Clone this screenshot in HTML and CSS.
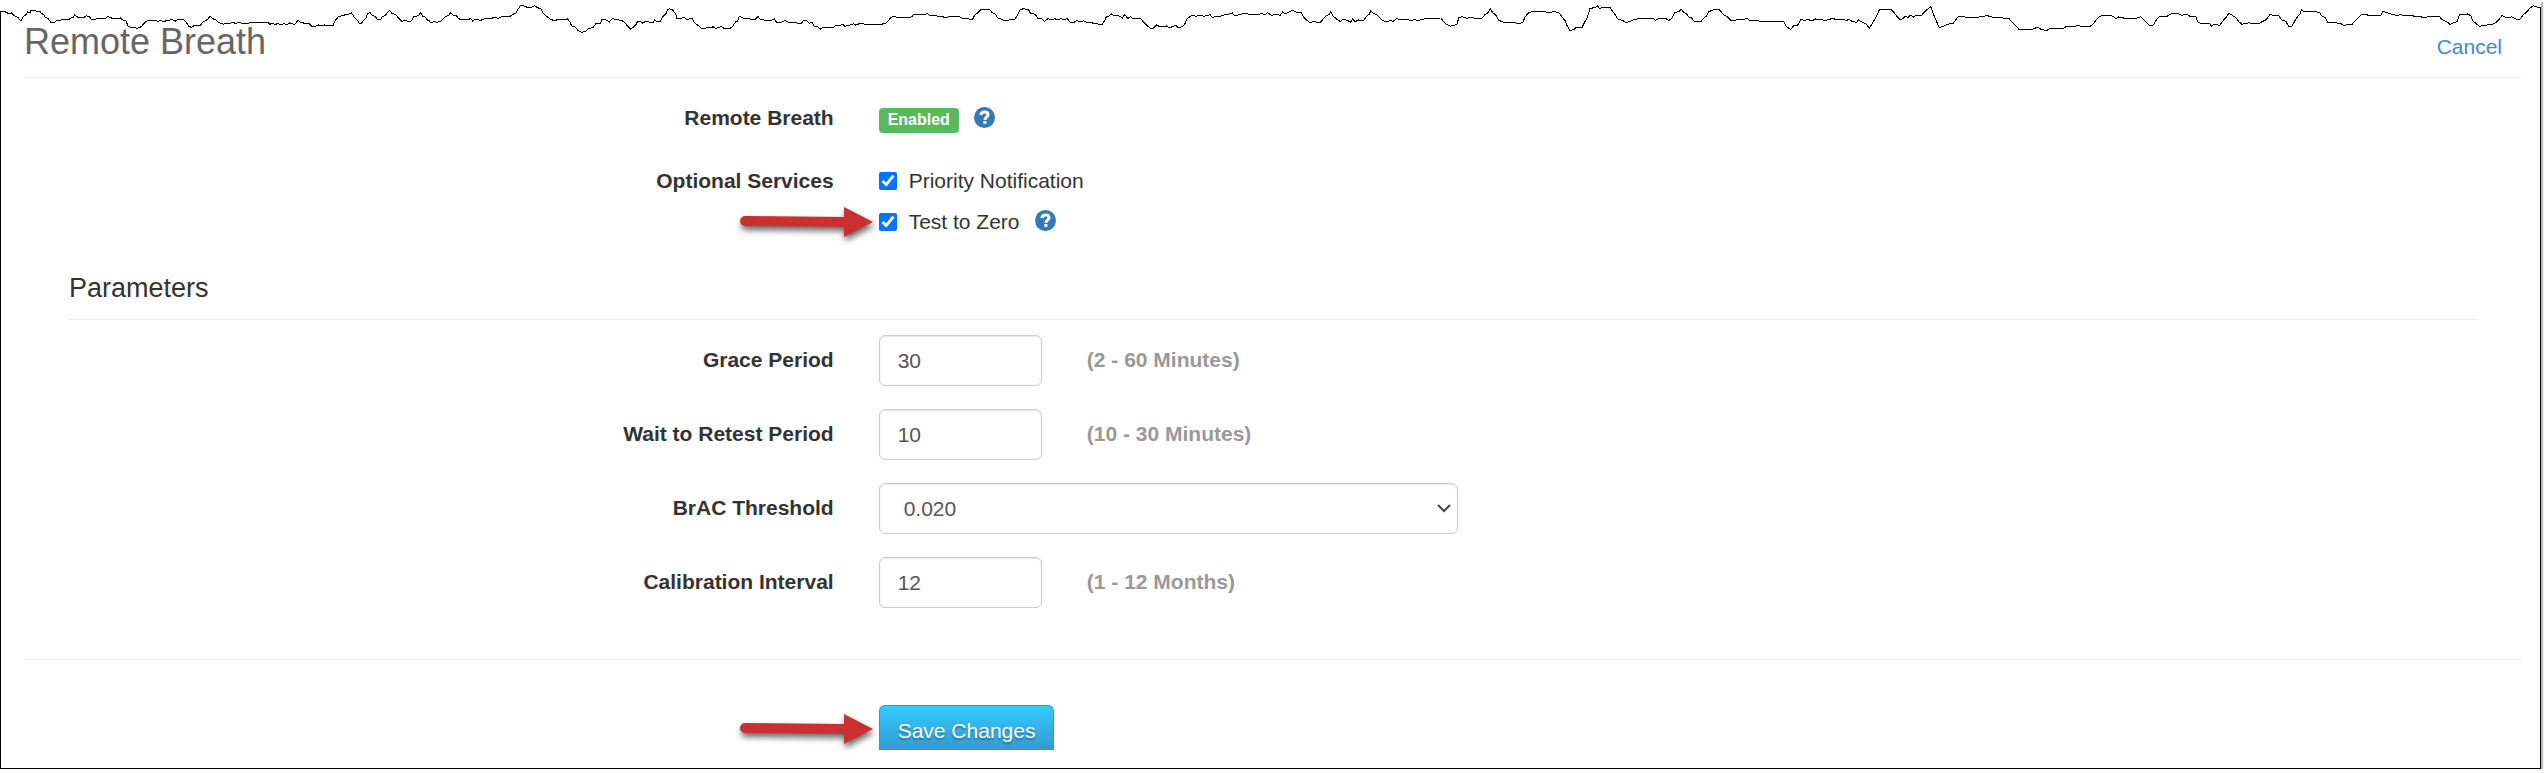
FILE: index.html
```html
<!DOCTYPE html>
<html lang="en">
<head>
    <meta charset="UTF-8">
    <meta name="viewport" content="width=device-width, initial-scale=1.0">
    <title>Remote Breath</title>
    <link rel="stylesheet" href="styles.css">
</head>
<body>

<div class="page">
    <svg class="torn-edge" viewBox="0 0 6225 105" preserveAspectRatio="none" aria-hidden="true">
        <path d="M-10 -10 L-10 36 L0 36 L8 34 L16 37 L20 40 L28 39 L34 46 L44 52 L49 60 L53 60 L58 48 L62 46 L68 36 L74 37 L76 31 L87 31 L89 34 L98 34 L101 40 L108 45 L111 52 L118 56 L124 66 L135 66 L139 61 L150 60 L153 57 L170 57 L173 54 L179 53 L183 45 L188 50 L194 53 L202 54 L207 51 L211 47 L219 50 L223 57 L228 60 L238 56 L258 55 L263 50 L270 52 L275 55 L290 57 L295 54 L301 60 L308 62 L314 78 L321 83 L330 82 L334 85 L343 83 L349 76 L355 67 L365 60 L370 62 L380 60 L387 65 L394 61 L401 66 L407 62 L423 59 L430 63 L437 58 L450 59 L456 66 L462 79 L469 82 L474 78 L490 76 L498 66 L509 58 L515 48 L521 56 L530 60 L535 68 L541 70 L548 73 L553 70 L565 70 L570 67 L577 70 L585 67 L594 70 L601 69 L606 72 L613 67 L657 68 L661 73 L667 69 L675 74 L680 70 L687 75 L695 71 L702 74 L709 69 L722 73 L730 61 L738 68 L749 70 L758 71 L764 79 L774 78 L780 75 L787 78 L795 75 L816 76 L822 60 L830 49 L842 47 L847 42 L855 42 L861 39 L867 50 L875 60 L880 69 L885 70 L892 60 L898 52 L900 41 L907 38 L912 46 L918 49 L925 58 L932 59 L937 49 L944 47 L949 37 L955 32 L960 40 L969 44 L973 49 L979 58 L985 65 L993 60 L999 64 L1008 63 L1014 50 L1025 47 L1030 38 L1035 48 L1042 52 L1047 60 L1052 63 L1056 69 L1063 65 L1072 67 L1080 63 L1087 54 L1092 50 L1099 46 L1104 38 L1110 46 L1119 48 L1123 55 L1130 60 L1137 57 L1148 59 L1153 55 L1158 63 L1165 58 L1178 61 L1187 56 L1205 55 L1210 52 L1221 55 L1228 50 L1250 49 L1256 43 L1264 39 L1270 26 L1275 17 L1283 18 L1290 21 L1303 21 L1310 17 L1316 23 L1325 26 L1331 40 L1340 50 L1349 58 L1360 63 L1366 58 L1380 59 L1390 57 L1396 65 L1400 77 L1410 82 L1416 91 L1424 97 L1433 95 L1441 87 L1453 82 L1460 71 L1471 70 L1475 58 L1485 60 L1493 66 L1500 56 L1513 59 L1524 62 L1531 68 L1537 78 L1545 87 L1553 80 L1559 72 L1562 64 L1568 64
            L1575 70 L1580 65 L1600 67 L1604 60 L1609 66 L1617 65 L1624 50 L1632 40 L1635 29 L1640 26 L1648 30 L1655 41 L1658 54 L1670 54 L1676 52 L1682 58 L1696 56 L1702 69 L1712 78 L1718 84 L1726 86 L1732 83 L1742 83 L1747 80 L1753 86 L1761 82 L1767 79 L1774 85 L1787 86 L1795 79 L1802 66 L1807 65 L1811 50 L1818 52 L1824 56 L1850 58 L1857 50 L1862 58 L1869 58 L1875 62 L1889 62 L1897 56 L1902 66 L1915 66 L1923 61 L1930 66 L1943 66 L1953 69 L1963 70 L1968 62 L1976 62 L1982 70 L1989 67 L1995 80 L2002 79 L2009 88 L2016 83 L2042 82 L2047 77 L2055 78 L2064 73 L2070 79 L2079 76 L2087 74 L2090 71 L2096 75 L2108 70 L2120 73 L2145 74 L2158 73 L2170 70 L2178 60 L2182 52 L2190 50 L2206 53 L2219 54 L2233 51 L2238 44 L2264 44 L2272 41 L2279 47 L2290 45 L2298 50 L2310 50 L2316 54 L2326 50 L2350 50 L2358 55 L2369 54 L2375 58 L2383 57 L2389 43 L2396 38 L2403 29 L2425 29 L2430 38 L2438 42 L2445 55 L2453 57 L2459 61 L2473 60 L2487 57 L2494 42 L2499 30 L2507 26 L2520 29 L2524 39 L2536 43 L2544 57 L2551 56 L2559 64 L2567 56 L2578 59 L2584 56 L2592 60 L2599 55 L2606 59 L2615 56 L2621 66 L2632 67 L2638 60 L2645 66 L2655 62 L2662 67 L2670 66 L2681 71 L2700 73 L2706 62 L2710 51 L2716 50 L2722 41 L2728 46 L2739 47 L2745 49 L2749 55 L2755 44 L2763 55 L2770 50 L2774 55 L2794 55 L2802 67 L2812 79 L2819 85 L2826 84 L2833 75 L2840 79 L2858 78 L2864 83 L2873 80 L2881 76 L2886 82 L2894 81 L2902 74 L2908 56 L2917 49 L2920 45 L2930 49 L2940 45 L2950 49 L2965 44 L2970 53 L2977 50 L2990 49 L3000 44 L3012 42 L3019 39 L3025 47 L3033 45 L3046 41 L3078 44 L3091 41 L3099 44 L3106 38 L3114 46 L3127 43 L3136 46
            L3142 36 L3149 41 L3157 36 L3166 31 L3174 36 L3187 37 L3193 50 L3201 60 L3209 68 L3216 65 L3234 67 L3241 58 L3247 49 L3256 43 L3260 36 L3266 48 L3274 57 L3284 65 L3291 57 L3303 62 L3308 67 L3314 57 L3320 65 L3328 60 L3341 61 L3348 49 L3354 43 L3358 33 L3365 40 L3373 44 L3379 51 L3386 60 L3396 66 L3408 61 L3412 65 L3421 56 L3430 59 L3449 59 L3457 62 L3463 59 L3475 61 L3488 57 L3502 55 L3530 54 L3537 66 L3545 74 L3553 79 L3561 76 L3569 73 L3574 53 L3581 50 L3593 55 L3605 52 L3615 56 L3630 55 L3638 44 L3645 38 L3651 27 L3658 39 L3665 46 L3672 61 L3682 66 L3689 69 L3697 66 L3710 67 L3719 71 L3730 68 L3736 52 L3743 40 L3754 34 L3764 36 L3775 33 L3786 36 L3799 37 L3808 34 L3820 39 L3828 53 L3835 63 L3839 77 L3846 91 L3855 89 L3861 83 L3875 84 L3881 69 L3889 52 L3895 25 L3908 23 L3913 17 L3918 25 L3930 22 L3945 22 L3951 36 L3958 45 L3962 56 L3974 61 L3983 67 L3993 65 L4001 60 L4014 56 L4038 55 L4045 57 L4050 54 L4055 61 L4064 56 L4082 56 L4088 62 L4097 53 L4102 38 L4114 34 L4119 28 L4125 37 L4132 42 L4137 51 L4144 54 L4151 64 L4167 65 L4173 55 L4180 49 L4186 35 L4195 31 L4200 27 L4210 27 L4217 36 L4223 44 L4231 50 L4240 61 L4254 60 L4262 58 L4269 60 L4279 55 L4288 62 L4300 61 L4320 65 L4370 65 L4376 80 L4387 88 L4395 76 L4404 75 L4412 59 L4421 61 L4430 59 L4439 62 L4448 57 L4459 59 L4472 61 L4481 59 L4490 54 L4498 60 L4510 57 L4522 61 L4530 59 L4537 64 L4548 67 L4553 60 L4562 66 L4571 72 L4580 84 L4588 68 L4597 49 L4605 27 L4631 27 L4640 38 L4648 51 L4655 59 L4661 56 L4667 50
            L4675 52 L4680 45 L4688 51 L4694 45 L4708 45 L4716 34 L4725 25 L4730 20 L4736 41 L4745 67 L4751 82 L4761 79 L4770 73 L4785 70 L4791 60 L4798 49 L4813 51 L4828 53 L4849 51 L4869 47 L4882 52 L4921 55 L4930 68 L4938 76 L4946 88 L4982 87 L4991 81 L5000 88 L5014 92 L5020 86 L5054 86 L5060 81 L5081 80 L5089 76 L5104 80 L5118 81 L5127 73 L5134 62 L5141 52 L5152 45 L5168 46 L5177 49 L5184 57 L5190 51 L5202 54 L5235 54 L5245 50 L5252 60 L5260 70 L5267 77 L5275 75 L5283 59 L5291 48 L5310 48 L5316 43 L5324 39 L5336 40 L5344 46 L5358 43 L5365 49 L5380 51 L5384 66 L5391 70 L5412 70 L5418 78 L5425 73 L5438 76 L5447 61 L5455 50 L5460 40 L5469 46 L5478 54 L5485 65 L5492 73 L5510 68 L5517 72 L5534 71 L5542 65 L5552 59 L5561 44 L5573 47 L5582 46 L5590 60 L5600 64 L5607 80 L5614 81 L5620 67 L5626 54 L5634 43 L5638 29 L5645 35 L5660 33 L5682 37 L5688 48 L5697 54 L5702 66 L5734 70 L5743 78 L5750 73 L5762 73 L5771 61 L5778 52 L5785 44 L5800 45 L5808 48 L5833 46 L5838 33 L5845 37 L5857 42 L5870 46 L5883 44 L5891 48 L5910 47 L5920 51 L5930 49 L5936 54 L5948 50 L5964 49 L5977 51 L5982 59 L5994 65 L6002 73 L6009 69 L6020 65 L6023 51 L6027 43 L6045 42 L6053 47 L6058 62 L6067 72 L6075 79 L6085 76 L6107 73 L6116 66 L6124 56 L6129 47 L6140 52 L6153 51 L6164 57 L6174 57 L6182 44 L6190 36 L6197 25 L6206 17 L6215 21 L6225 24 L6225 -10 Z"/>
    </svg>

    <div class="header">
        <h1>Remote Breath</h1>
        <a class="cancel" href="#">Cancel</a>
    </div>

    <form>
        <div class="row status-row">
            <div class="row-label">Remote Breath</div>
            <div class="row-wide">
                <span class="badge">Enabled</span>
                <button type="button" class="help" aria-label="Remote Breath help">
                    <svg viewBox="0 0 21 21"><circle cx="10.5" cy="10.5" r="10.5"/><path d="M6.9 8.1C7.1 5.5 8.5 4.9 10.5 4.9C12.8 4.9 14 6 14 7.7C14 9.8 11.1 10.1 10.9 12.8"/><rect x="9.3" y="14" width="3.1" height="2.8"/></svg>
                </button>
            </div>
        </div>

        <div class="row services-row">
            <div class="row-label">Optional Services</div>
            <div class="row-wide services">
                <div class="check-line">
                    <input type="checkbox" id="priority" checked>
                    <label for="priority">Priority Notification</label>
                </div>
                <div class="check-line">
                    <input type="checkbox" id="testToZero" checked>
                    <label for="testToZero">Test to Zero</label>
                    <button type="button" class="help" aria-label="Test to Zero help">
                        <svg viewBox="0 0 21 21"><circle cx="10.5" cy="10.5" r="10.5"/><path d="M6.9 8.1C7.1 5.5 8.5 4.9 10.5 4.9C12.8 4.9 14 6 14 7.7C14 9.8 11.1 10.1 10.9 12.8"/><rect x="9.3" y="14" width="3.1" height="2.8"/></svg>
                    </button>
                    <svg class="arrow" viewBox="0 0 134 30" aria-hidden="true"><path d="M6 9L105 10V0L134 15L105 30V20L6 19A5 5 0 0 1 6 9Z"/></svg>
                </div>
            </div>
        </div>

        <h2>Parameters</h2>

        <div class="row field-row">
            <label class="row-label" for="gracePeriod">Grace Period</label>
            <div class="row-small"><input type="text" id="gracePeriod" value="30"></div>
            <div class="hint">(2 - 60 Minutes)</div>
        </div>
        <div class="row field-row">
            <label class="row-label" for="retestPeriod">Wait to Retest Period</label>
            <div class="row-small"><input type="text" id="retestPeriod" value="10"></div>
            <div class="hint">(10 - 30 Minutes)</div>
        </div>
        <div class="row field-row">
            <label class="row-label" for="threshold">BrAC Threshold</label>
            <div class="row-medium">
                <select id="threshold">
                    <option>0.020</option>
                </select>
                <svg class="chevron" viewBox="0 0 14 9" aria-hidden="true"><path d="M1 1L7 7L13 1"/></svg>
            </div>
        </div>
        <div class="row field-row">
            <label class="row-label" for="calibration">Calibration Interval</label>
            <div class="row-small"><input type="text" id="calibration" value="12"></div>
            <div class="hint">(1 - 12 Months)</div>
        </div>

        <div class="row footer">
            <div class="row-action">
                <button type="submit" class="save">Save Changes</button>
                <svg class="arrow" viewBox="0 0 134 30" aria-hidden="true"><path d="M6 9L105 10V0L134 15L105 30V20L6 19A5 5 0 0 1 6 9Z"/></svg>
            </div>
        </div>
    </form>
</div>

</body>
</html>
```
FILE: styles.css
```css
body {
    margin: 0;
    background: #fff;
    color: #333;
    font-family: "Liberation Sans", Arial, sans-serif;
    font-size: 21px;
    line-height: 30px;
}
h1, h2 {
    margin: 0;
    font-weight: normal;
}
input, select, button {
    box-sizing: border-box;
    font-family: inherit;
    font-size: inherit;
    line-height: inherit;
}
.page {
    position: relative;
    margin-right: 4px;
    padding: 22px 18px 18px 23px;
    border: 1px solid #000;
    border-top: none;
    box-shadow: 2px 10px 1px -8px #bbb, 2px 2px 1px #bbb;
}
.torn-edge {
    position: absolute;
    top: 0;
    left: -1px;
    width: calc(100% + 2px);
    height: 35px;
}
.torn-edge path {
    fill: #fff;
    stroke: #000;
    stroke-width: 1px;
    vector-effect: non-scaling-stroke;
    shape-rendering: crispEdges;
}
.header {
    position: relative;
    display: flex;
    justify-content: space-between;
    align-items: baseline;
    height: 55px;
    border-bottom: 1px solid #eee;
}
h1 {
    font-size: 36px;
    line-height: 40px;
    color: #666;
}
.cancel {
    margin-right: 20px;
    color: #428bca;
    text-decoration: none;
}
.row {
    display: grid;
    grid-template-columns: repeat(12, minmax(0, 1fr));
}
.row > * {
    padding: 0 23px 0 22px;
}
.row-label {
    grid-column: span 4;
    text-align: right;
    font-weight: bold;
}
.row-wide {
    grid-column: span 8;
    display: flex;
}
.row-small {
    grid-column: span 1;
}
.row-medium {
    grid-column: span 3;
    position: relative;
}
.row-action {
    grid-column: 5 / span 8;
    position: relative;
}
.status-row {
    margin-top: 25px;
}
.badge {
    height: 25px;
    margin-top: 5px;
    padding: 0 9px;
    border-radius: 4px;
    background: #5cb85c;
    color: #fff;
    font-size: 16px;
    font-weight: bold;
    line-height: 23px;
}
.help {
    width: 21px;
    height: 21px;
    margin: 4px 0 0 15px;
    padding: 0;
    border: none;
    background: none;
    cursor: pointer;
}
.help svg {
    display: block;
}
.help circle {
    fill: #337ab7;
}
.help path {
    fill: none;
    stroke: #fff;
    stroke-width: 3;
}
.help rect {
    fill: #fff;
}
.services-row {
    margin-top: 33px;
}
.services {
    flex-direction: column;
    gap: 11px;
}
.check-line {
    position: relative;
    display: flex;
}
.check-line input {
    width: 18px;
    height: 18px;
    margin: 6px 12px 0 0;
    accent-color: #0075ff;
}
.check-line .help {
    margin-top: 3px;
}
.arrow {
    position: absolute;
    top: 0;
    left: -140px;
    width: 134px;
    height: 30px;
    overflow: visible;
    filter: drop-shadow(1px 4px 3px rgba(0, 0, 0, 0.6));
}
.arrow path {
    fill: #c9302f;
}
.row-action .arrow {
    top: 9px;
    left: -118px;
}
h2 {
    margin: 36px 45px 15px;
    padding-bottom: 16px;
    border-bottom: 1px solid #eee;
    font-size: 27px;
}
.field-row {
    margin-bottom: 23px;
}
.field-row .row-label, .hint {
    padding-top: 10px;
}
.hint {
    grid-column: span 7;
    color: #999;
    font-weight: bold;
}
.field-row input, select {
    display: block;
    width: 100%;
    height: 51px;
    padding: 0 18px;
    border: 1px solid #ccc;
    border-radius: 6px;
    background: #fff;
    color: #555;
    box-shadow: inset 0 1px 2px rgba(0, 0, 0, 0.1);
}
select {
    appearance: none;
    padding: 0 24px;
}
.chevron {
    position: absolute;
    top: 21px;
    right: 30px;
    width: 14px;
    height: 9px;
    pointer-events: none;
}
.chevron path {
    fill: none;
    stroke: #444;
    stroke-width: 2;
}
.footer {
    margin-top: 51px;
    padding-top: 45px;
    border-top: 1px solid #eee;
}
.save {
    display: block;
    height: 45px;
    padding: 5px 18px 0;
    border: 1px solid #3498d0;
    border-bottom: none;
    border-radius: 6px 6px 0 0;
    background: linear-gradient(#33ccff, #3498d2);
    color: #fff;
    text-shadow: 0 2px 2px rgba(0, 0, 0, 0.3);
    cursor: pointer;
}
```
